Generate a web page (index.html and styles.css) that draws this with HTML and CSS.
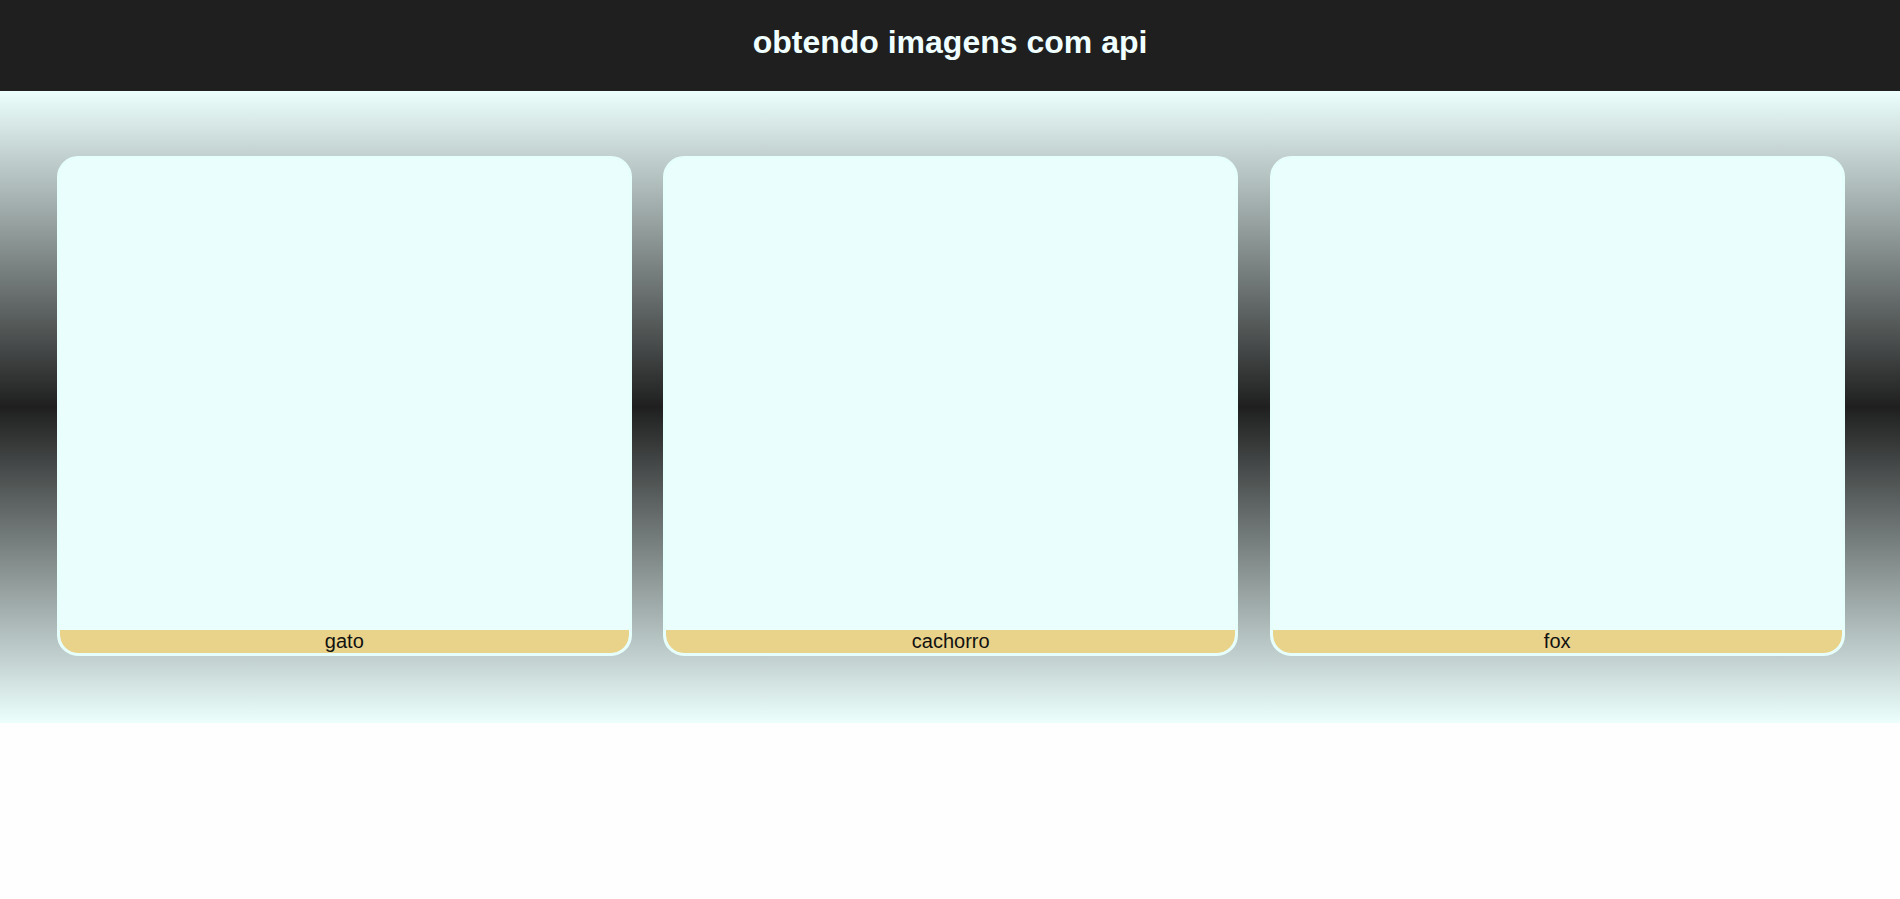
FILE: index.html
```html
<!DOCTYPE html>
<html lang="pt">
<head>
<meta charset="utf-8">
<title>obtendo imagens com api</title>
<link rel="stylesheet" href="styles.css">
</head>
<body>
<header class="topbar">
  <h1 class="title">obtendo imagens com api</h1>
</header>
<main class="gallery">
  <div class="card">
    <div class="card-img"></div>
    <div class="card-label">gato</div>
  </div>
  <div class="card">
    <div class="card-img"></div>
    <div class="card-label">cachorro</div>
  </div>
  <div class="card">
    <div class="card-img"></div>
    <div class="card-label">fox</div>
  </div>
</main>
</body>
</html>
```
FILE: styles.css
```css
html, body {
  margin: 0;
  padding: 0;
  background: #fefefe;
  font-family: "Liberation Sans", Arial, sans-serif;
}

.topbar {
  height: 91px;
  box-sizing: border-box;
  padding-top: 24px;
  background: #1f1f1f;
  text-align: center;
}

.title {
  margin: 0;
  font-size: 32px;
  font-weight: bold;
  line-height: 37px;
  color: #f0ffff;
}

.gallery {
  height: 632px;
  box-sizing: border-box;
  padding: 65px 55.5px 0 57px;
  display: flex;
  gap: 31.75px;
  align-items: flex-start;
  background: linear-gradient(#ecfffd, #1f1f1f, #ecfffd);
}

.card {
  flex: 1;
  height: 500px;
  box-sizing: border-box;
  border: 3px solid #e6fffd;
  border-radius: 21px;
  background: #eafffd;
  overflow: hidden;
  display: flex;
  flex-direction: column;
}

.card-img {
  flex: 1;
}

.card-label {
  height: 23px;
  background: #e9d38b;
  color: #111;
  font-size: 20px;
  line-height: 23px;
  text-align: center;
  border-radius: 0 0 18px 18px;
}
```
